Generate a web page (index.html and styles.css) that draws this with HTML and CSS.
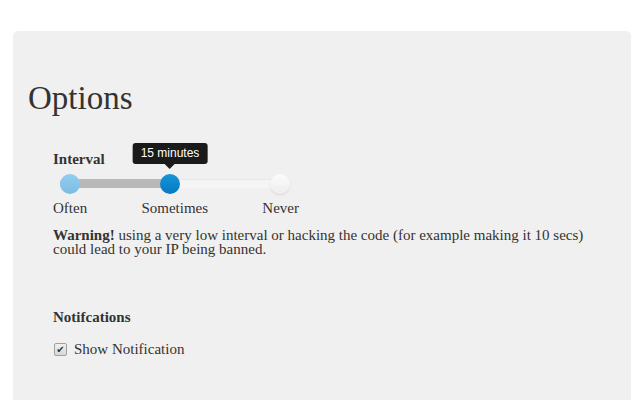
FILE: index.html
```html
<!DOCTYPE html>
<html>
<head>
<meta charset="utf-8">
<link rel="stylesheet" href="styles.css">
</head>
<body>
<div class="panel">
  <h1 class="title">Options</h1>
  <div class="section">
    <h3 class="label">Interval</h3>
    <div class="slider">
      <div class="track">
        <div class="fill"></div>
        <span class="handle h-often"></span>
        <span class="handle h-some"><span class="tip">15 minutes</span></span>
        <span class="handle h-never"></span>
      </div>
      <div class="ticks">
        <span>Often</span>
        <span>Sometimes</span>
        <span>Never</span>
      </div>
    </div>
    <p class="warning"><b>Warning!</b> using a very low interval or hacking the code (for example making it 10 secs) could lead to your IP being banned.</p>
  </div>
  <div class="section notif">
    <h3 class="label">Notifcations</h3>
    <label class="check"><span class="box">&#10004;</span> Show Notification</label>
  </div>
</div>
</body>
</html>
```
FILE: styles.css
```css
html, body {
  margin: 0;
  padding: 0;
  background: #ffffff;
}
body {
  font-family: "Liberation Serif", "Times New Roman", serif;
  color: #333333;
  height: 400px;
  overflow: hidden;
}
.panel {
  margin: 31px 9px 0 13px;
  background: #f0f0f0;
  border-radius: 5px 5px 0 0;
  padding: 50px 15px 0 15px;
  height: 369px;
  box-sizing: border-box;
}
.title {
  margin: 0;
  font-weight: normal;
  font-size: 33px;
  line-height: 34px;
  color: #333;
}
.section {
  padding-left: 25px;
}
.label {
  margin: 0;
  font-size: 15px;
  font-weight: bold;
  line-height: 16px;
}
.section:first-of-type .label {
  margin-top: 36px;
}
.slider {
  width: 246px;
  margin-top: 12px;
}
.track {
  position: relative;
  margin-left: 7px;
  width: 230px;
  height: 9px;
  margin-top: 6px;
  background: #f5f5f5;
  border-radius: 4px;
  box-shadow: inset 0 1px 1px rgba(0,0,0,0.06);
}
.fill {
  width: 110px;
  height: 100%;
  background: #b8b8b8;
  border-radius: 4px 0 0 4px;
}
.handle {
  position: absolute;
  top: -5px;
  width: 20px;
  height: 20px;
  margin-left: -10px;
  border-radius: 50%;
  box-sizing: border-box;
}
.h-often {
  left: 10px;
  background: linear-gradient(#92cdef, #7dbde3);
}
.h-some {
  left: 110px;
  background: linear-gradient(#1596da, #0579bf);
}
.h-never {
  left: 220px;
  background: linear-gradient(#fbfbfb, #eeeeee);
  box-shadow: 0 1px 2px rgba(0,0,0,0.12);
}
.tip {
  position: absolute;
  bottom: 30px;
  left: 50%;
  transform: translateX(-50%);
  background: #1a1a1a;
  color: #fff;
  font-family: "Liberation Sans", Arial, sans-serif;
  font-size: 12px;
  line-height: 21px;
  padding: 0 8px;
  border-radius: 3px;
  white-space: nowrap;
}
.tip::after {
  content: "";
  position: absolute;
  top: 100%;
  left: 50%;
  margin-left: -5px;
  border: 5px solid transparent;
  border-top-color: #1a1a1a;
  border-bottom: 0;
}
.ticks {
  display: flex;
  justify-content: space-between;
  margin-top: 12px;
  font-size: 15px;
  line-height: 16px;
}
.warning {
  margin: 12px 0 0 0;
  font-size: 15px;
  line-height: 14px;
  max-width: 560px;
}
.notif {
  margin-top: 53px;
}
.check {
  display: flex;
  align-items: center;
  margin-top: 16px;
  font-size: 15px;
  line-height: 16px;
}
.box {
  width: 11px;
  height: 11px;
  margin: 0 7px 0 1px;
  border: 1px solid #a0a0a0;
  border-radius: 2px;
  background: linear-gradient(#f0f0f0, #d8d8d8);
  color: #333;
  font-family: "DejaVu Sans", sans-serif;
  font-size: 10px;
  line-height: 11px;
  text-align: center;
}
```
